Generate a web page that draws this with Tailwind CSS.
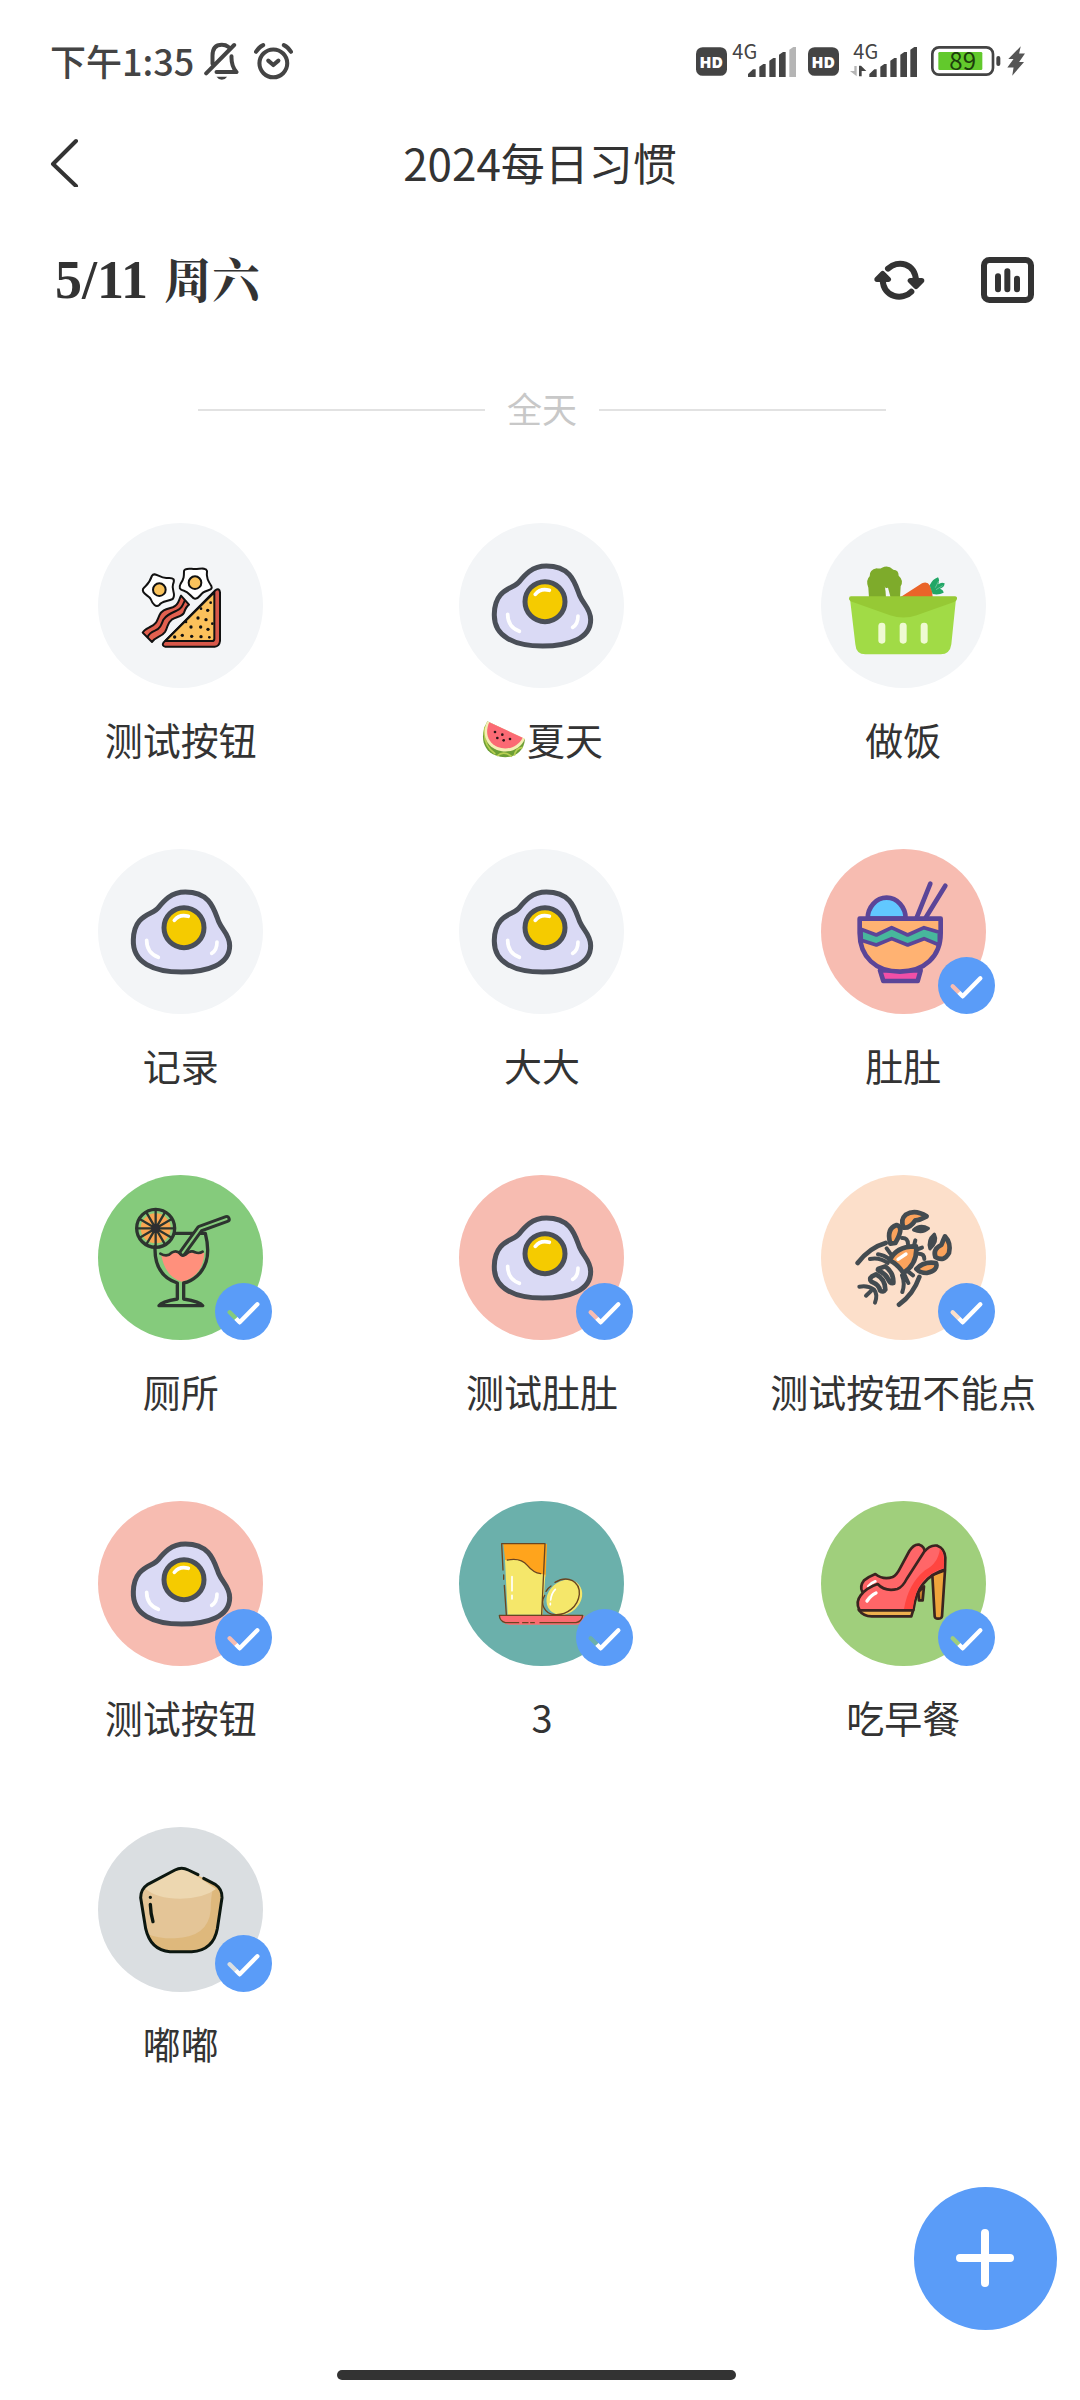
<!DOCTYPE html>
<html lang="zh-CN">
<head>
    <meta charset="UTF-8">
    <meta name="viewport" content="width=device-width, initial-scale=1.0">
    <title>2024每日习惯</title>
    <script src="https://cdn.jsdelivr.net/npm/@tailwindcss/browser@4"></script>
</head>
<body class="bg-white text-[#333333] font-['Noto_Sans_CJK_SC',sans-serif] flex flex-col min-h-screen overflow-x-hidden">

    <!-- Shared drawings -->
    <svg class="absolute size-0" aria-hidden="true">
        <symbol id="egg" viewBox="57 68 495 495">
            <path d="M319 197C275 197 253 225 237 245C222 266 165 262 163 340C160 410 225 437 308 437C385 437 452 415 452 358C452 325 430 312 420 288C405 250 395 197 319 197Z" fill="#dadaf5" stroke="#4a4f58" stroke-width="15"/>
            <circle cx="315" cy="304" r="60" fill="#f5cb00" stroke="#4a4f58" stroke-width="15"/>
            <path d="M286 282Q302 262 328 270M203 342Q203 380 238 393M414 347Q414 372 398 381" fill="none" stroke="#fff" stroke-width="11" stroke-linecap="round"/>
        </symbol>
        <!-- The tick is cut out of the badge, so the circle below shows through -->
        <mask id="tick" maskUnits="userSpaceOnUse" x="0" y="0" width="171" height="171">
            <rect width="171" height="171" fill="#fff"/>
            <path d="M44 88L74 118L127 64" fill="none" stroke="#000" stroke-width="13" stroke-linecap="round" stroke-linejoin="round"/>
        </mask>
        <symbol id="badge" viewBox="0 0 171 171">
            <circle cx="85.5" cy="85.5" r="85.5" fill="#5a9cf8" mask="url(#tick)"/>
        </symbol>
        <symbol id="hd" viewBox="107 80 93 86">
            <rect x="107" y="80" width="93" height="86" rx="20" fill="#444"/>
            <text x="153" y="141" text-anchor="middle" font-family="Open Sans, sans-serif" font-weight="800" font-size="47" fill="#fff">HD</text>
        </symbol>
    </svg>

    <!-- Status bar -->
    <div class="h-[122px] pl-[50px] pr-[55px] flex items-center justify-between text-[#444444]">
        <div class="flex items-center">
            <span class="text-4xl font-medium pb-0.5">下午1:35</span>
            <svg class="w-9 h-[38px] ml-2.5" viewBox="588 67 105 114" fill="none" stroke="#444" stroke-width="12" stroke-linecap="round" stroke-linejoin="round">
                <path d="M612 132V108Q612 75 640 75Q652 75 659 81M669 110Q668 140 684 157H624M593 161L677 76"/>
                <path d="M624 171H656Q650 180 640 180T624 171Z" fill="#444" stroke="none"/>
            </svg>
            <svg class="size-[39px] ml-3.5" viewBox="731 65 115 115" fill="none" stroke="#444" stroke-width="12" stroke-linecap="round">
                <circle cx="788" cy="128" r="41"/>
                <path d="M773 120L788 133L803 120" stroke-linejoin="round"/>
                <path d="M737 94Q745 80 758 74M840 94Q832 80 819 74"/>
            </svg>
        </div>
        <div class="flex items-center">
            <svg class="w-[31px] h-[29px]"><use href="#hd"/></svg>
            <svg class="w-16 h-9 ml-[5px] overflow-visible" viewBox="216 68 192 108" fill="#444">
                <text x="217" y="115" font-family="Noto Sans CJK SC, sans-serif" font-size="60">4G</text>
                <path d="M264 170V161L279 147H287V170ZM298 170V139L310 131H317V170ZM328 170V121L340 113H347V170ZM357 170V103L369 95H377V170Z"/>
                <path d="M388 170V88L400 80H408V170Z" fill="#b5b5b5"/>
            </svg>
            <svg class="w-[31px] h-[29px] ml-3"><use href="#hd"/></svg>
            <svg class="w-[67px] h-9 ml-[11px] overflow-visible" viewBox="570 68 201 108" fill="#444">
                <text x="580" y="115" font-family="Noto Sans CJK SC, sans-serif" font-size="60">4G</text>
                <path d="M583 137H590V168L570 152H583Z" fill="#b5b5b5"/>
                <path d="M597 168H605V152H619L603 136H597Z"/>
                <path d="M628 170V161L643 147H650V170ZM661 170V139L673 131H680V170ZM691 170V121L703 113H710V170ZM721 170V103L733 95H741V170ZM751 170V88L763 80H771V170Z"/>
            </svg>
            <svg class="w-[70px] h-[30px] ml-3.5 overflow-visible" viewBox="812 78 210 90">
                <rect x="816" y="82" width="182" height="82" rx="20" fill="#fff" stroke="#444" stroke-width="8"/>
                <rect x="834" y="96" width="132" height="54" rx="4" fill="#62c92c"/>
                <rect x="1008" y="108" width="12" height="30" rx="6" fill="#444"/>
                <text x="907" y="150" text-anchor="middle" font-family="Noto Sans CJK SC, sans-serif" font-size="72" fill="#1d3d0d">89</text>
            </svg>
            <svg class="w-[18px] h-[30px] ml-1.5" viewBox="1040 78 55 90" fill="#555">
                <path d="M1082 78L1044 117H1060L1041 143H1060L1056 168L1092 126H1077L1095 100H1077Z"/>
            </svg>
        </div>
    </div>

    <!-- Title bar -->
    <header class="h-20 px-[50px] grid grid-cols-[1fr_auto_1fr] items-center">
        <button type="button" aria-label="返回" class="justify-self-start">
            <svg class="w-8 h-[50px]" viewBox="0 0 32 50" fill="none" stroke="#333" stroke-width="4" stroke-linecap="round" stroke-linejoin="round">
                <path d="M26 4L3 27L26 49"/>
            </svg>
        </button>
        <h1 class="text-[44px] leading-[60px]">2024每日习惯</h1>
    </header>

    <!-- Date and actions -->
    <div class="h-[156px] pl-[55px] pr-[46px] flex items-center justify-between">
        <h2 class="flex items-baseline gap-4 font-bold">
            <span class="font-['Liberation_Serif',serif] text-[54px] leading-none">5/11</span>
            <span class="font-['Noto_Serif_CJK_SC','Noto_Sans_CJK_SC',serif] text-5xl leading-none">周六</span>
        </h2>
        <div class="flex items-center gap-14">
            <button type="button" aria-label="刷新">
                <svg class="w-[51px] h-10" viewBox="641 720 153 120" fill="none" stroke="#333" stroke-width="18" stroke-linecap="round" stroke-linejoin="round">
                    <path d="M683 746C710 718 768 728 767 785M753 815C728 842 668 834 667 778"/>
                    <path d="M750 782H784L767 799ZM650 778L667 761L684 778Z" fill="#333" stroke-width="16"/>
                </svg>
            </button>
            <button type="button" aria-label="统计">
                <svg class="w-[53px] h-[46px]" viewBox="962 710 159 138" fill="none" stroke="#333" stroke-width="18" stroke-linecap="round">
                    <rect x="971" y="719" width="141" height="120" rx="16"/>
                    <path d="M1013 768V807M1041 753V807M1070 775V807"/>
                </svg>
            </button>
        </div>
    </div>

    <!-- Section divider -->
    <div class="h-[104px] pl-[198px] pr-[194px] flex items-center gap-[22px] text-[35px] text-[#c8c8c8]">
        <span class="flex-1 h-0.5 bg-[#e2e2e2]"></span>
        <span class="pb-1">全天</span>
        <span class="flex-1 h-0.5 bg-[#e2e2e2]"></span>
    </div>

    <!-- Habits -->
    <main class="pt-[61px] -mr-1 grid grid-cols-3 gap-y-[81px] text-[38px] leading-[58px]">
        <button type="button" class="flex flex-col items-center gap-[22px] whitespace-nowrap">
            <span class="relative size-[165px] rounded-full bg-[#f3f5f7]">
                <svg class="size-full" viewBox="54 68 495 495" stroke="#111" stroke-width="6" stroke-linejoin="round">
                    <path d="M216 226C224 212 240 236 262 233C282 231 285 238 279 252C273 268 290 283 278 296C262 304 245 302 238 314C228 322 218 312 212 296C206 285 184 280 189 266C196 254 206 256 216 226Z" fill="#fff"/>
                    <circle cx="238" cy="268" r="19" fill="#fac35c"/>
                    <path d="M312 212C315 200 335 207 346 206C360 206 378 200 381 212C378 232 385 243 394 257C400 270 382 268 370 276C358 285 356 297 344 295C334 292 328 275 312 271C298 268 296 262 302 250C312 236 312 228 312 212Z" fill="#fff"/>
                    <circle cx="345" cy="247" r="19" fill="#fac35c"/>
                    <path d="M303 286C296 300 296 314 280 320C262 326 245 328 238 345C230 365 228 372 210 380C200 385 192 388 188 397L216 425C225 410 245 410 255 395C265 378 260 370 275 358C290 348 305 350 312 337C316 325 320 318 327 313Z" fill="#e2604f"/>
                    <path d="M315 299C308 315 305 324 290 331C270 340 258 345 250 358C244 374 240 385 225 391C212 396 206 402 202 411" fill="none"/>
                    <path d="M407 269Q418 262 420 276V422Q418 438 404 439H256Q244 437 251 426Z" fill="#d8584a"/>
                    <path d="M403 276V415Q403 422 396 422H256Z" fill="#fbc15b"/>
                    <g fill="#111" stroke="none">
                        <circle cx="392" cy="307" r="4"/><circle cx="383" cy="330" r="5"/><circle cx="363" cy="325" r="4"/><circle cx="354" cy="353" r="5"/><circle cx="378" cy="358" r="5"/>
                        <circle cx="397" cy="370" r="4"/><circle cx="333" cy="380" r="5"/><circle cx="362" cy="380" r="5"/><circle cx="384" cy="387" r="5"/><circle cx="318" cy="365" r="4"/>
                        <circle cx="307" cy="405" r="5"/><circle cx="335" cy="408" r="5"/><circle cx="363" cy="409" r="5"/><circle cx="284" cy="410" r="5"/><circle cx="388" cy="411" r="4"/>
                    </g>
                </svg>
            </span>
            <span>测试按钮</span>
        </button>

        <button type="button" class="flex flex-col items-center gap-[22px] whitespace-nowrap">
            <span class="relative size-[165px] rounded-full bg-[#f3f5f7]">
                <svg class="size-full"><use href="#egg"/></svg>
            </span>
            <span class="flex items-center">
                <svg class="w-[46px] h-[38px]" viewBox="122 670 138 114" role="img" aria-label="西瓜">
                    <path d="M141 674C118 715 125 760 165 776C205 792 250 775 254 728Z" fill="#6d9f35"/>
                    <path d="M134 690Q125 745 165 772M170 778Q190 760 215 780M222 777Q225 755 247 752" fill="none" stroke="#b7cf52" stroke-width="5"/>
                    <path d="M141 674C124 706 134 745 168 759C200 772 238 762 254 726Z" fill="#f4efb4"/>
                    <path d="M147 677C133 706 141 738 172 751C200 762 232 752 247 723Z" fill="#fb6a74"/>
                    <g fill="#2b1517">
                        <circle cx="164" cy="706" r="4"/><circle cx="171" cy="724" r="4"/><circle cx="186" cy="714" r="4"/><circle cx="190" cy="731" r="4"/><circle cx="209" cy="727" r="4"/>
                    </g>
                </svg>
                <span>夏天</span>
            </span>
        </button>

        <button type="button" class="flex flex-col items-center gap-[22px] whitespace-nowrap">
            <span class="relative size-[165px] rounded-full bg-[#f3f5f7]">
                <svg class="size-full" viewBox="63 68 495 495">
                    <path d="M207 292L205 262Q196 240 209 228Q208 208 230 204Q240 206 246 202Q264 192 280 208Q296 208 296 226Q312 240 302 258L300 292H272L264 262L256 264L258 292Z" fill="#7eab2b"/>
                    <path d="M254 258L270 288H262Z" fill="#f3f5f7"/>
                    <path d="M302 290L366 249Q382 242 390 256Q398 270 398 290Z" fill="#ea6429"/>
                    <path d="M389 255Q398 236 414 231Q420 240 415 252Q424 244 434 249Q433 262 420 265Q430 268 431 277Q416 285 398 281Z" fill="#21a666"/>
                    <path d="M406 262L416 242M408 268L428 256" stroke="#f3f5f7" stroke-width="1"/>
                    <path d="M150 295H468L454 432Q450 462 422 462H196Q168 462 166 432Z" fill="#a1db46"/>
                    <path d="M153 288H465Q472 288 471 296Q470 302 462 305L350 345Q311 358 270 345L158 305Q147 301 147 295Q147 288 153 288Z" fill="#96c935"/>
                    <g fill="#effad2"><rect x="235" y="367" width="21" height="63" rx="10"/><rect x="299" y="367" width="21" height="63" rx="10"/><rect x="362" y="367" width="21" height="63" rx="10"/></g>
                </svg>
            </span>
            <span>做饭</span>
        </button>

        <button type="button" class="flex flex-col items-center gap-[22px] whitespace-nowrap">
            <span class="relative size-[165px] rounded-full bg-[#f3f5f7]">
                <svg class="size-full"><use href="#egg"/></svg>
            </span>
            <span>记录</span>
        </button>

        <button type="button" class="flex flex-col items-center gap-[22px] whitespace-nowrap">
            <span class="relative size-[165px] rounded-full bg-[#f3f5f7]">
                <svg class="size-full"><use href="#egg"/></svg>
            </span>
            <span>大大</span>
        </button>

        <button type="button" class="flex flex-col items-center gap-[22px] whitespace-nowrap">
            <span class="relative size-[165px] rounded-full bg-[#f7bcb1]">
                <svg class="size-full" viewBox="63 56 495 495" stroke="#5b4598" stroke-width="14" stroke-linecap="round" stroke-linejoin="round">
                    <path d="M203 265A57 63 0 0 1 317 265Z" fill="#61c8ff"/>
                    <path d="M391 160L350 262M436 166L377 262"/>
                    <path d="M240 420L250 452H353L362 420Z" fill="#f14fa7"/>
                    <path d="M179 265H422V308C422 380 372 424 300 424S179 380 179 308Z" fill="#ffb272"/>
                    <path d="M183 297L229 314L275 292L323 314L372 292L418 306V344L372 325L323 344L275 325L229 344L184 330Z" fill="#47b79c" stroke-width="11"/>
                </svg>
                <svg class="absolute -right-[9px] bottom-0 size-[57px]"><use href="#badge"/></svg>
            </span>
            <span>肚肚</span>
        </button>

        <button type="button" class="flex flex-col items-center gap-[22px] whitespace-nowrap">
            <span class="relative size-[165px] rounded-full bg-[#85cb7c]">
                <svg class="size-full" viewBox="54 44 495 495" fill="none" stroke="#2d342f" stroke-width="10" stroke-linecap="round" stroke-linejoin="round">
                    <path d="M243 280Q262 292 277 278Q290 270 300 282Q312 290 325 276Q345 270 373 278Q368 350 305 364Q255 350 243 280Z" fill="#ff907c" stroke="none"/>
                    <path d="M286 219H376Q398 305 352 346Q332 364 311 368V416Q360 424 368 436H237Q245 424 292 416V368Q222 345 225 258"/>
                    <path d="M241 280Q262 292 275 277Q290 268 300 280Q312 290 325 276Q337 270 345 276Q358 281 368 274" stroke-width="8"/>
                    <path d="M308 277L360 205L440 176" stroke-width="24"/>
                    <path d="M308 277L360 205L440 176" stroke="#85cb7c" stroke-width="6"/>
                    <circle cx="227" cy="204" r="57"/>
                    <circle cx="227" cy="204" r="45" fill="#f9a552" stroke="none"/>
                    <path d="M172 204H282M227 149V259M179 176L275 232M199 156L255 252M255 156L199 252M275 176L179 232" stroke-width="7"/>
                    <circle cx="227" cy="204" r="13" fill="#2d2d30" stroke="none"/>
                </svg>
                <svg class="absolute -right-[9px] bottom-0 size-[57px]"><use href="#badge"/></svg>
            </span>
            <span>厕所</span>
        </button>

        <button type="button" class="flex flex-col items-center gap-[22px] whitespace-nowrap">
            <span class="relative size-[165px] rounded-full bg-[#f7bcb1]">
                <svg class="size-full"><use href="#egg"/></svg>
                <svg class="absolute -right-[9px] bottom-0 size-[57px]"><use href="#badge"/></svg>
            </span>
            <span>测试肚肚</span>
        </button>

        <button type="button" class="flex flex-col items-center gap-[22px] whitespace-nowrap">
            <span class="relative size-[165px] rounded-full bg-[#fcdfca]">
                <svg class="size-full" viewBox="243 44 495 495" fill="none" stroke="#434b50" stroke-width="14" stroke-linecap="round" stroke-linejoin="round">
                    <!-- antennae, eyes and legs -->
                    <path d="M353 308Q388 262 437 248M477 433Q520 402 538 350"/>
                    <path d="M390 296Q418 290 443 308M414 282Q432 284 450 298M440 264L455 285M487 395Q496 370 486 345M505 368L492 340M519 345L500 330" stroke-width="12"/>
                    <path d="M486 233Q504 232 504 252M526 240L522 256M546 262L530 268M553 296Q553 280 536 280" stroke-width="12"/>
                    <!-- body -->
                    <path d="M449 300Q470 256 528 258Q534 310 490 338Q474 312 449 300Z" fill="#fba35c"/>
                    <path d="M474 297L498 281" stroke="#fff" stroke-width="10"/>
                    <!-- arms -->
                    <path d="M451 250Q438 205 470 194Q494 200 466 248Z" fill="#fba35c"/>
                    <path d="M529 326Q550 302 588 308Q596 330 560 338Q540 338 529 326Z" fill="#fba35c"/>
                    <!-- claws -->
                    <path d="M491 202Q480 178 497 163Q525 146 560 168Q538 180 526 180Q510 204 491 202Z" fill="#fba35c"/>
                    <path d="M586 290Q578 266 604 254Q610 238 615 228Q634 248 627 278Q612 306 586 290Z" fill="#fba35c"/>
                    <path d="M521 209Q540 190 565 204Q548 220 521 209ZM570 265Q562 240 583 222Q594 244 570 265Z" fill="#434b50" stroke-width="10"/>
                    <!-- tail -->
                    <path d="M436 318Q462 338 460 368Q450 370 444 356Q438 342 422 334Q410 330 416 325Z"/>
                    <path d="M408 342Q436 356 436 388Q430 398 420 390Q418 374 394 364Q386 356 396 348Z"/>
                    <path d="M358 379Q384 374 402 388Q414 402 405 427M378 406L393 392" stroke-width="12"/>
                </svg>
                <svg class="absolute -right-[9px] bottom-0 size-[57px]"><use href="#badge"/></svg>
            </span>
            <span>测试按钮不能点</span>
        </button>

        <button type="button" class="flex flex-col items-center gap-[22px] whitespace-nowrap">
            <span class="relative size-[165px] rounded-full bg-[#f7bcb1]">
                <svg class="size-full"><use href="#egg"/></svg>
                <svg class="absolute -right-[9px] bottom-0 size-[57px]"><use href="#badge"/></svg>
            </span>
            <span>测试按钮</span>
        </button>

        <button type="button" class="flex flex-col items-center gap-[22px] whitespace-nowrap">
            <span class="relative size-[165px] rounded-full bg-[#6bb0ab]">
                <svg class="size-full" viewBox="57 63 495 495" fill="none" stroke="#6b4520" stroke-width="4" stroke-linecap="round" stroke-linejoin="round">
                    <path d="M190 192H321L317 290L300 284L196 245Z" fill="#ffa41c" stroke="none"/>
                    <path d="M195 240Q240 232 262 256Q284 282 316 284L308 404H203Z" fill="#f5e76a" stroke="none"/>
                    <ellipse cx="373" cy="352" rx="58" ry="48" transform="rotate(-42 373 352)" fill="#f5e76a" stroke="none"/>
                    <path d="M179 407H434Q434 432 410 434H208Q184 432 179 407Z" fill="#fb6b70" stroke="none"/>
                    <path d="M189 270L185 191H315L305 404M191 285V298M193 316L199 404M202 240Q242 232 262 256Q280 278 302 281"/>
                    <path d="M318 334Q326 322 333 318M345 307C385 284 420 305 418 343C414 380 380 406 345 404C312 402 300 370 314 346"/>
                    <path d="M236 428H196Q179 424 178 406H428Q426 424 408 428H300M248 428H264M272 428H283"/>
                    <path d="M216 290V332M216 346V357M346 328Q334 340 332 360M331 370V374" stroke="#fff" stroke-width="5"/>
                </svg>
                <svg class="absolute -right-[9px] bottom-0 size-[57px]"><use href="#badge"/></svg>
            </span>
            <span>3</span>
        </button>

        <button type="button" class="flex flex-col items-center gap-[22px] whitespace-nowrap">
            <span class="relative size-[165px] rounded-full bg-[#a0cf7c]">
                <svg class="size-full" viewBox="63 62 495 495" stroke="#3a2420" stroke-width="8" stroke-linecap="round" stroke-linejoin="round">
                    <path d="M355 335L357 360H368L372 318Z" fill="#c8822c"/>
                    <path d="M187 335Q178 318 192 300Q208 288 226 281Q250 300 278 290Q290 284 300 264L328 212Q342 190 358 193Q374 198 374 215L320 310Q290 345 240 330Z" fill="#ff6668"/>
                    <path d="M205 318Q212 308 226 303" stroke="#fff" fill="none"/>
                    <path d="M397 284L404 408Q405 415 414 415Q425 415 426 408L435 270Z" fill="#efa43b"/>
                    <path d="M176 388Q190 408 215 408H334L340 388Z" fill="#eeb04e"/>
                    <path d="M178 388Q166 365 182 345Q200 322 233 311Q255 335 292 326Q308 320 320 296L372 215Q390 192 412 196Q434 204 436 232L435 268Q395 278 368 312Q348 335 340 390H178Z" fill="#ff6668"/>
                    <path d="M420 204Q436 222 431 264Q395 272 364 308Q346 330 338 386H312Q325 310 375 270Q415 250 420 204Z" fill="#ff4540" stroke="none"/>
                    <path d="M201 362Q212 345 228 338" stroke="#fff" fill="none" stroke-width="10"/>
                </svg>
                <svg class="absolute -right-[9px] bottom-0 size-[57px]"><use href="#badge"/></svg>
            </span>
            <span>吃早餐</span>
        </button>

        <button type="button" class="flex flex-col items-center gap-[22px] whitespace-nowrap">
            <span class="relative size-[165px] rounded-full bg-[#dadee1]">
                <svg class="size-full" viewBox="54 50 495 495" stroke-linecap="round" stroke-linejoin="round">
                    <path d="M182 262Q182 236 202 226L285 180Q305 168 325 180L405 222Q428 236 426 262L412 358Q400 424 335 424H270Q212 420 196 355Z" fill="#deb87c"/>
                    <path d="M182 262Q182 236 202 226L400 230Q392 260 392 300Q385 380 285 384Q235 385 200 370Z" fill="#e4c597"/>
                    <path d="M192 232L285 180Q305 168 325 180L408 236Q370 265 300 265Q230 265 192 232Z" fill="#edd7b0"/>
                    <path d="M354 193L325 179Q305 168 285 179L202 223Q182 236 182 262L197 355Q212 420 270 424H335Q400 420 412 355L426 262Q427 236 407 223L371 204" fill="none" stroke="#0c1710" stroke-width="9"/>
                    <path d="M211 261V261M211 282Q212 310 219 334" fill="none" stroke="#0c1710" stroke-width="10"/>
                </svg>
                <svg class="absolute -right-[9px] bottom-0 size-[57px]"><use href="#badge"/></svg>
            </span>
            <span>嘟嘟</span>
        </button>
    </main>

    <!-- Add button -->
    <button type="button" aria-label="添加" class="fixed right-[23px] bottom-[70px] size-[143px] rounded-full bg-[#5a9cf8] flex items-center justify-center">
        <svg class="size-[59px]" viewBox="0 0 59 59" stroke="#fff" stroke-width="8" stroke-linecap="round">
            <path d="M29 4V54M4 29H54"/>
        </svg>
    </button>

    <!-- Home indicator -->
    <div class="mt-auto pb-5 pr-2 flex justify-center">
        <div class="w-[399px] h-2.5 rounded-full bg-[#333333]"></div>
    </div>
</body>
</html>
